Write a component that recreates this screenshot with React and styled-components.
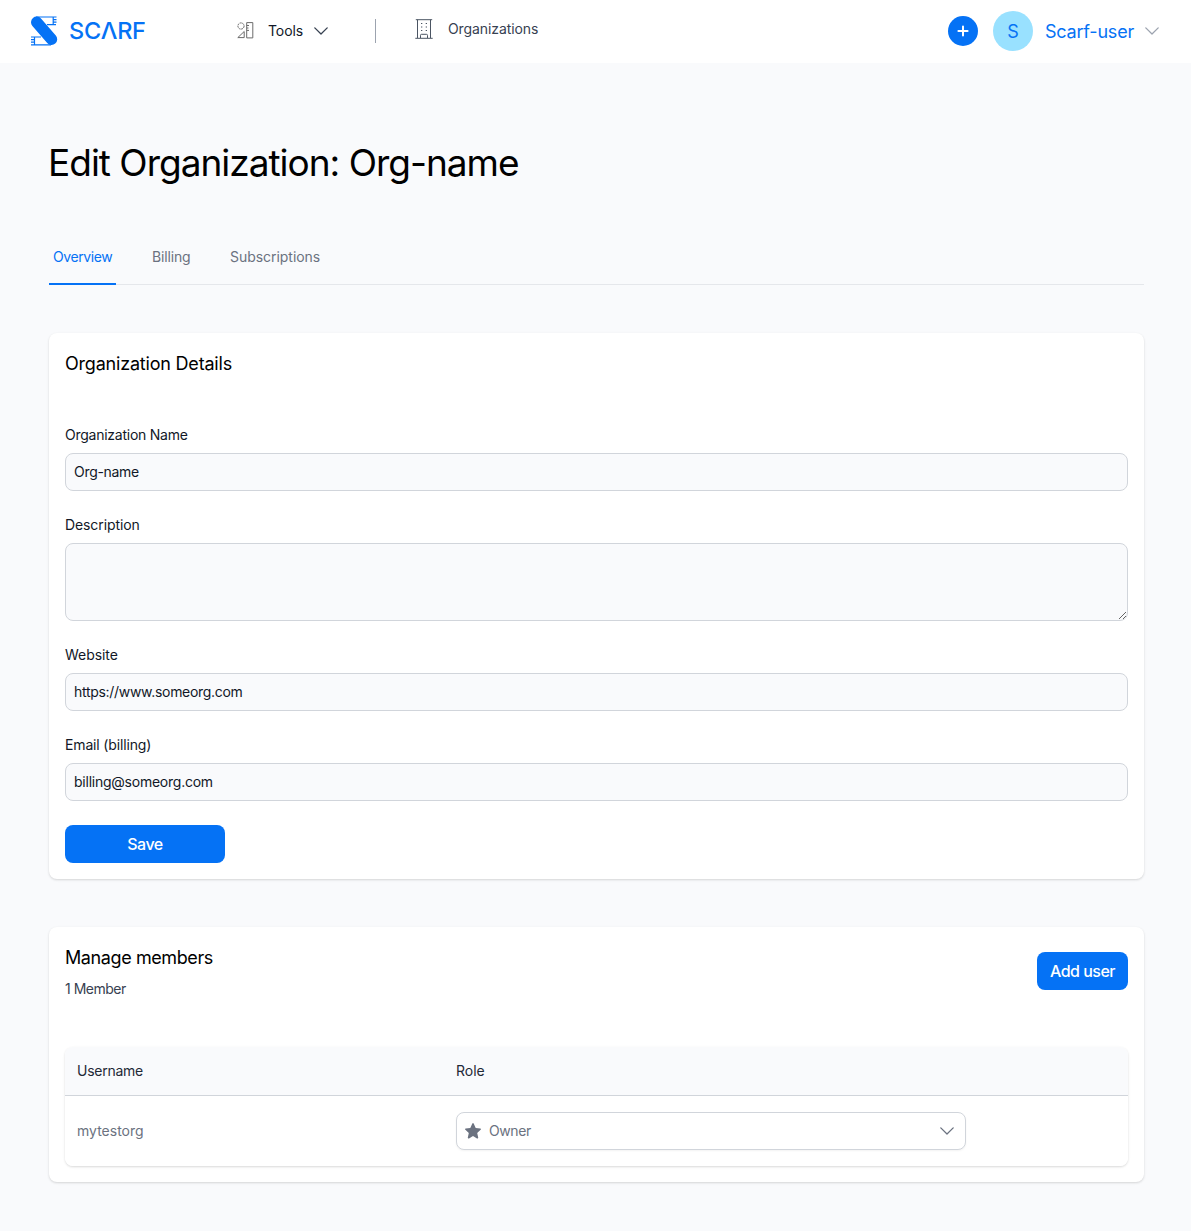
import React from "react";
import styled, { createGlobalStyle } from "styled-components";

const blue = "#0572f5";

const GlobalStyle = createGlobalStyle`
  *, *::before, *::after { box-sizing: border-box; }
  body {
    margin: 0;
    background: #f9fafc;
    color: #111827;
    font-family: Inter, "Liberation Sans", sans-serif;
    font-size: 14px;
    line-height: 20px;
  }
  button, input, textarea { font: inherit; color: inherit; }
  h1, h2, p { margin: 0; font-weight: 400; }
  svg { display: block; flex: none; }
`;

const Page = styled.div`
  min-height: 1231px;
`;

const NavBar = styled.header`
  display: flex;
  align-items: center;
  height: 63px;
  padding: 0 32px 2px 30px;
  background: #fff;
`;

const Brand = styled.a`
  display: flex;
  align-items: center;
  gap: 11px;
  width: 207px;
  color: ${blue};
`;

const Wordmark = styled.span`
  font-size: 23.5px;
  line-height: 28px;
  letter-spacing: -0.3px;
  font-weight: 500;
`;

const NavItem = styled.a`
  display: flex;
  align-items: center;
  gap: ${(p) => p.$gap}px;
  color: ${(p) => p.$color};
  margin-top: ${(p) => p.$lift || 0}px;
`;

const Label = styled.span`
  letter-spacing: ${(p) => p.$track || 0}px;
  white-space: nowrap;
`;

const MenuLabel = styled(Label)`
  margin-right: -3px;
`;

const Divider = styled.span`
  width: 1px;
  height: 24px;
  margin: 0 39px 0 47px;
  background: #9ca3af;
`;

const Account = styled.div`
  display: flex;
  align-items: center;
  margin-left: auto;
`;

const AddButton = styled.button`
  display: grid;
  place-items: center;
  width: 30px;
  height: 30px;
  padding: 0;
  border: 0;
  border-radius: 50%;
  background: ${blue};
`;

const Avatar = styled.span`
  display: grid;
  place-items: center;
  width: 40px;
  height: 40px;
  margin: 0 12px 0 15px;
  border-radius: 50%;
  background: #99e1ff;
  color: ${blue};
  font-size: 18px;
  padding-top: 2px;
`;

const UserName = styled.span`
  width: 100px;
  font-size: 18px;
  line-height: 28px;
  letter-spacing: -0.2px;
  padding-top: 2px;
  color: ${blue};
  white-space: nowrap;
`;

const Main = styled.main`
  padding: 76px 47px 49px 49px;
`;

const Title = styled.h1`
  margin-left: -1px;
  font-size: 37px;
  line-height: 48px;
  letter-spacing: -1px;
  color: #000;
  white-space: nowrap;
`;

const Tabs = styled.nav`
  display: flex;
  gap: 32px;
  height: 46px;
  margin: 52px 0 48px;
  border-bottom: 1px solid #e5e7eb;
`;

const Tab = styled.a`
  height: 46px;
  padding: 8px 4px 0;
  border-bottom: 2px solid ${(p) => (p.$active ? blue : "transparent")};
  color: ${(p) => (p.$active ? blue : "#6b7280")};
  width: ${(p) => p.$width}px;
  letter-spacing: ${(p) => p.$track || 0}px;
  white-space: nowrap;
`;

const Card = styled.section`
  padding: 16px;
  border-radius: 8px;
  background: #fff;
  box-shadow: 0 1px 3px rgba(0, 0, 0, 0.1), 0 1px 2px rgba(0, 0, 0, 0.06);
  & + & { margin-top: 48px; }
`;

const CardTitle = styled.h2`
  font-size: 18px;
  line-height: 28px;
  letter-spacing: ${(p) => p.$track || 0}px;
  color: #000;
  padding-top: 1px;
  height: 28px;
`;

const Form = styled.form`
  display: flex;
  flex-direction: column;
  align-items: flex-start;
  gap: 24px;
  margin-top: 48px;
`;

const Field = styled.label`
  display: flex;
  flex-direction: column;
  gap: 8px;
  width: 100%;
`;

const TextInput = styled.input`
  height: 38px;
  padding: 0 8px 2px;
  border: 1px solid #d1d5db;
  border-radius: 8px;
  background: #f9fafc;
  outline: none;
  letter-spacing: ${(p) => p.$track || 0}px;
`;

const TextArea = styled.textarea`
  display: block;
  height: 78px;
  padding: 8px;
  border: 1px solid #d1d5db;
  border-radius: 8px;
  background: #f9fafc;
  outline: none;
  resize: vertical;
`;

const PrimaryButton = styled.button`
  width: ${(p) => p.$width}px;
  height: 38px;
  padding: 0;
  border: 0;
  border-radius: 8px;
  background: ${blue};
  color: #fff;
  font-size: 16px;
  font-weight: 500;
  letter-spacing: ${(p) => p.$track || 0}px;
  white-space: nowrap;
`;

const MembersHead = styled.div`
  display: flex;
  align-items: center;
  justify-content: space-between;
  margin-bottom: 48px;
`;

const Count = styled.p`
  margin-top: 8px;
  color: #374151;
  letter-spacing: -0.5px;
`;

const Table = styled.div`
  border-radius: 8px;
  overflow: hidden;
  box-shadow: 0 1px 3px rgba(0, 0, 0, 0.1), 0 1px 2px rgba(0, 0, 0, 0.06);
`;

const Row = styled.div`
  display: grid;
  grid-template-columns: 379px 510px;
  align-items: center;
  height: ${(p) => (p.$head ? 49 : 70)}px;
  padding: 0 12px;
  background: ${(p) => (p.$head ? "#f9fafc" : "#fff")};
  border-bottom: ${(p) => (p.$head ? "1px solid #d1d5db" : "0")};
  color: ${(p) => (p.$head ? "#1f2937" : "#6b7280")};
`;

const Select = styled.button`
  display: flex;
  align-items: center;
  gap: 8px;
  height: 38px;
  padding: 0 11px 0 8px;
  border: 1px solid #d1d5db;
  border-radius: 8px;
  background: #fff;
  box-shadow: 0 1px 2px rgba(0, 0, 0, 0.05);
  & > svg:last-child { margin-left: auto; }
`;

const Logo = () => (
  <svg width="28" height="32" viewBox="0 0 28 32" fill="none" stroke={blue}>
    <path d="M6.7 7.3L21.5 24.3" strokeWidth="11.4" strokeLinecap="round" />
    <path d="M6 2H26.5M17 9.7H26M23.2 2V9.7M23.2 4.6H26.5M23.2 7.2H26.5" strokeWidth="1.2" />
    <path d="M1 29.8H21M1 22H11M4.5 22V29.8M1 24.6H4.5M1 27.2H4.5" strokeWidth="1.2" />
  </svg>
);

const ToolsIcon = () => (
  <svg width="17" height="17" viewBox="0 0 17 17" fill="none" stroke="#6b6b6b">
    <circle cx="4" cy="4" r="3.1" strokeDasharray="2 .6" />
    <path d="M.8 15.6L7.2 9.5V15.6ZM9.7.6H15.8V15.9H9.7ZM9.7 3.5H12M9.7 6H11.5M9.7 8.4H12" />
  </svg>
);

const BuildingIcon = () => (
  <svg width="18" height="20" viewBox="0 0 18 20" fill="none" stroke="#4b5563">
    <path d="M.8.7H17.2M2.5.7V19M15.5.7V19M.3 19.3H17.7M5.5 19V16.3Q5.5 15.3 6.5 15.3H11.5Q12.5 15.3 12.5 16.3V19" strokeWidth="1" />
    <path d="M6 4.5H7.3M10.7 4.5H12M6 8H7.3M10.7 8H12M6 11.5H7.3M10.7 11.5H12" strokeWidth="1.2" />
  </svg>
);

const Chevron = ({ color }) => (
  <svg width="14" height="8" viewBox="0 0 14 8" fill="none" stroke={color} strokeWidth="1.3" strokeLinecap="round" strokeLinejoin="round">
    <path d="M.8 .9L7 7L13.2 .9" />
  </svg>
);

const Plus = () => (
  <svg width="12" height="12" viewBox="0 0 12 12" stroke="#fff" strokeWidth="2" strokeLinecap="round">
    <path d="M6 1.4V10.6M1.4 6H10.6" />
  </svg>
);

const Star = () => (
  <svg width="16" height="16" viewBox="0 0 16 16" fill="#6b7280">
    <path d="M7.2.7Q8 -.6 8.8.7L10.7 5.1L15.3 5.5Q16.6 5.8 15.6 6.8L12.2 9.9L13.2 14.6Q13.3 16 12 15.4L8 13L4 15.4Q2.7 16 2.8 14.6L3.8 9.9L.4 6.8Q-.6 5.8.7 5.5L5.3 5.1Z" />
  </svg>
);

export default function App() {
  return (
    <Page>
      <GlobalStyle />
      <NavBar>
        <Brand aria-label="Scarf">
          <Logo />
          <Wordmark>SCΛRF</Wordmark>
        </Brand>
        <NavItem $gap={14} $color="#111827">
          <ToolsIcon />
          <MenuLabel $track={-0.1}>Tools</MenuLabel>
          <Chevron color="#374151" />
        </NavItem>
        <Divider />
        <NavItem $gap={15} $color="#374151" $lift={-4}>
          <BuildingIcon />
          <Label $track={-0.1}>Organizations</Label>
        </NavItem>
        <Account>
          <AddButton aria-label="Add"><Plus /></AddButton>
          <Avatar>S</Avatar>
          <UserName>Scarf-user</UserName>
          <Chevron color="#9ca3af" />
        </Account>
      </NavBar>
      <Main>
        <Title>Edit Organization: Org-name</Title>
        <Tabs>
          <Tab $active $width={67} $track={-0.4}>Overview</Tab>
          <Tab $width={46} $track={-0.15}>Billing</Tab>
          <Tab $width={98} $track={-0.04}>Subscriptions</Tab>
        </Tabs>
        <Card>
          <CardTitle $track={-0.2}>Organization Details</CardTitle>
          <Form>
            <Field>
              <Label $track={-0.25}>Organization Name</Label>
              <TextInput $track={-0.3} defaultValue="Org-name" />
            </Field>
            <Field>
              <Label $track={-0.1}>Description</Label>
              <TextArea />
            </Field>
            <Field>
              <Label $track={-0.05}>Website</Label>
              <TextInput $track={-0.3} defaultValue="https://www.someorg.com" />
            </Field>
            <Field>
              <Label $track={-0.15}>Email (billing)</Label>
              <TextInput $track={-0.24} defaultValue="billing@someorg.com" />
            </Field>
            <PrimaryButton type="button" $width={160} $track={-0.5}>Save</PrimaryButton>
          </Form>
        </Card>
        <Card>
          <MembersHead>
            <div>
              <CardTitle $track={-0.4}>Manage members</CardTitle>
              <Count>1 Member</Count>
            </div>
            <PrimaryButton type="button" $width={91} $track={-0.5}>Add user</PrimaryButton>
          </MembersHead>
          <Table>
            <Row $head>
              <Label $track={-0.25}>Username</Label>
              <Label>Role</Label>
            </Row>
            <Row>
              <Label>mytestorg</Label>
              <Select type="button">
                <Star />
                <Label $track={-0.4}>Owner</Label>
                <Chevron color="#6b7280" />
              </Select>
            </Row>
          </Table>
        </Card>
      </Main>
    </Page>
  );
}
